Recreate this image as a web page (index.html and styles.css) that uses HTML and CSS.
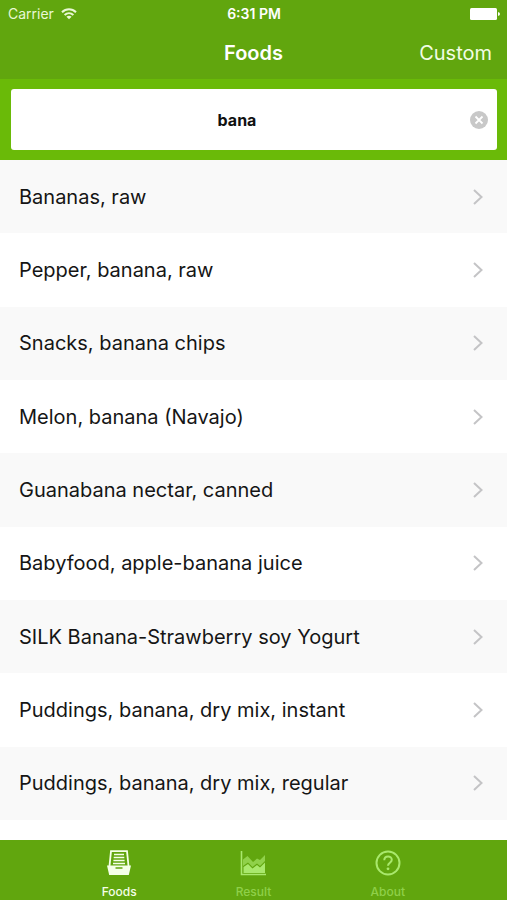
FILE: index.html
```html
<!DOCTYPE html>
<html lang="en">
<head>
<meta charset="utf-8">
<meta name="viewport" content="width=device-width, initial-scale=1">
<title>Foods</title>
<link rel="stylesheet" href="styles.css">
</head>
<body>
<div class="app">
  <header class="header">
    <div class="status">
      <div class="carrier">
        <span>Carrier</span>
        <svg width="16" height="12" viewBox="0 0 16 12" fill="none" stroke="currentColor" stroke-width="2" aria-hidden="true">
          <path d="M1 4.3C5 .3 11 .3 15 4.3M3.600 7C6.200 4.500 9.800 4.500 12.400 7"/>
          <path d="M5.400 8.700Q8 6.700 10.600 8.700L8 11.300Z" fill="currentColor" stroke="none"/>
        </svg>
      </div>
      <time class="clock">6:31 PM</time>
      <svg class="battery" width="30" height="12" viewBox="0 0 30 12" fill="currentColor" aria-hidden="true">
        <rect width="27" height="12" rx="1.500"/>
        <path d="M28 4Q30 4.500 30 6T28 8Z"/>
      </svg>
    </div>
    <nav class="navbar">
      <h1 class="title">Foods</h1>
      <button class="custom" type="button">Custom</button>
    </nav>
  </header>
  <form class="search" role="search">
    <div class="field">
      <input class="query" type="text" value="bana" aria-label="Search foods">
      <button class="clear" type="reset" aria-label="Clear search">
        <svg width="18" height="18" viewBox="0 0 18 18" aria-hidden="true">
          <circle cx="9" cy="9" r="9" fill="#c8c8c8"/>
          <path d="M5.500 5.500l7 7M12.500 5.500l-7 7" stroke="#fff" stroke-width="1.800"/>
        </svg>
      </button>
    </div>
  </form>
  <main class="list">
    <a class="row" href="#">Bananas, raw<svg class="chevron" viewBox="0 0 10 16"><path d="M1 1l7.500 7L1 15"/></svg></a>
    <a class="row" href="#">Pepper, banana, raw<svg class="chevron" viewBox="0 0 10 16"><path d="M1 1l7.500 7L1 15"/></svg></a>
    <a class="row" href="#">Snacks, banana chips<svg class="chevron" viewBox="0 0 10 16"><path d="M1 1l7.500 7L1 15"/></svg></a>
    <a class="row" href="#">Melon, banana (Navajo)<svg class="chevron" viewBox="0 0 10 16"><path d="M1 1l7.500 7L1 15"/></svg></a>
    <a class="row" href="#">Guanabana nectar, canned<svg class="chevron" viewBox="0 0 10 16"><path d="M1 1l7.500 7L1 15"/></svg></a>
    <a class="row" href="#">Babyfood, apple-banana juice<svg class="chevron" viewBox="0 0 10 16"><path d="M1 1l7.500 7L1 15"/></svg></a>
    <a class="row" href="#">SILK Banana-Strawberry soy Yogurt<svg class="chevron" viewBox="0 0 10 16"><path d="M1 1l7.500 7L1 15"/></svg></a>
    <a class="row" href="#">Puddings, banana, dry mix, instant<svg class="chevron" viewBox="0 0 10 16"><path d="M1 1l7.500 7L1 15"/></svg></a>
    <a class="row" href="#">Puddings, banana, dry mix, regular<svg class="chevron" viewBox="0 0 10 16"><path d="M1 1l7.500 7L1 15"/></svg></a>
  </main>
  <nav class="tabs" aria-label="Sections">
    <a class="tab active" href="#" aria-current="page">
      <svg width="26" height="26" viewBox="0 0 26 26" fill="none" stroke="currentColor" aria-hidden="true">
        <path d="M3.500 16L5 1.200h16L22.500 16" stroke-width="1.800"/>
        <path d="M8 4.500h10M7.700 7.500h10.600M7.400 10.500h11.200M7 13.500h12" stroke-width="1.700"/>
        <path fill="currentColor" fill-rule="evenodd" stroke="none" d="M1 15.500h24L22.800 25H3.200ZM9.500 17.300v1.500h7v-1.500Z"/>
      </svg>
      <span>Foods</span>
    </a>
    <a class="tab" href="#">
      <svg width="26" height="26" viewBox="0 0 26 26" fill="none" stroke="currentColor" aria-hidden="true">
        <path d="M1.500 1v23.500H26" stroke-width="1.600"/>
        <path fill="currentColor" stroke="none" d="M3.500 17L8 14l4.500 4.500L17 15l3 2.500 5-5V23H3.500Z"/>
        <path fill="currentColor" stroke="none" opacity=".65" d="M3 9.500L7.500 6l5.500 6 4-3.500 3 1.500 5-5v6l-5 5-3-2.500-4.500 3.500L8 12.500 3 16Z"/>
      </svg>
      <span>Result</span>
    </a>
    <a class="tab" href="#">
      <svg width="26" height="26" viewBox="0 0 26 26" fill="none" stroke="currentColor" aria-hidden="true">
        <circle cx="13" cy="13" r="11.500" stroke-width="2"/>
        <path d="M9.300 10.200C9.300 5.300 16.800 5.500 16.800 9.700c0 3-3.800 3-3.800 6" stroke-width="2"/>
        <circle cx="13" cy="18.800" r="1.400" fill="currentColor" stroke="none"/>
      </svg>
      <span>About</span>
    </a>
  </nav>
</div>
</body>
</html>
```
FILE: styles.css
```css
* {
  box-sizing: border-box;
}

body {
  margin: 0;
  font-family: Inter, "Liberation Sans", sans-serif;
  color: #151515;
  background: #fff;
}

button {
  padding: 0;
  border: 0;
  background: none;
  font: inherit;
  color: inherit;
  cursor: pointer;
}

a {
  color: inherit;
  text-decoration: none;
}

svg {
  display: block;
  flex: none;
}

.app {
  display: flex;
  flex-direction: column;
  min-height: 100vh;
}

.header {
  background: #61a60e;
  color: #fff;
}

.status,
.navbar {
  display: grid;
  grid-template-columns: 1fr auto 1fr;
  align-items: center;
}

.status {
  height: 27px;
  padding: 0 7px 0 8px;
  font-size: 14px;
}

.carrier {
  display: flex;
  align-items: center;
  gap: 7px;
  color: #e9f8d5;
}

.clock {
  font-weight: 600;
}

.battery {
  justify-self: end;
}

.navbar {
  height: 52px;
  padding: 0 15px;
  font-size: 20px;
}

.title {
  grid-column: 2;
  margin: 0;
  font-size: 20px;
  font-weight: 600;
}

.custom {
  justify-self: end;
  color: #f2fde4;
}

.search {
  padding: 10px 10px 10px 11px;
  background: #6aba08;
}

.field {
  display: flex;
  align-items: center;
  gap: 7px;
  height: 61px;
  padding-right: 9px;
  border-radius: 3px;
  background: #fff;
}

.query {
  flex: 1;
  min-width: 0;
  padding: 0;
  border: 0;
  outline: 0;
  background: none;
  font: 700 16px Inter, "Liberation Sans", sans-serif;
  color: #111;
  text-align: center;
}

.list {
  flex: 1;
  display: flex;
  flex-direction: column;
  padding-bottom: 20px;
}

.row {
  flex: 1;
  display: flex;
  align-items: center;
  justify-content: space-between;
  min-height: 56px;
  padding: 0 24px 0 19px;
  font-size: 20px;
}

.row:nth-child(odd) {
  background: #f9f9f9;
}

.chevron {
  width: 10px;
  height: 16px;
  fill: none;
  stroke: #c4c4c6;
  stroke-width: 2;
}

.tabs {
  display: flex;
  height: 60px;
  padding: 10px 52px 0;
  background: #61a60e;
}

.tab {
  flex: 1;
  display: flex;
  flex-direction: column;
  align-items: center;
  gap: 8px;
  font-size: 12px;
  font-weight: 500;
  line-height: 16px;
  color: #8fd049;
}

.tab svg {
  color: #a9e86c;
}

.tab.active,
.tab.active svg {
  color: #f4ffe8;
}
```
